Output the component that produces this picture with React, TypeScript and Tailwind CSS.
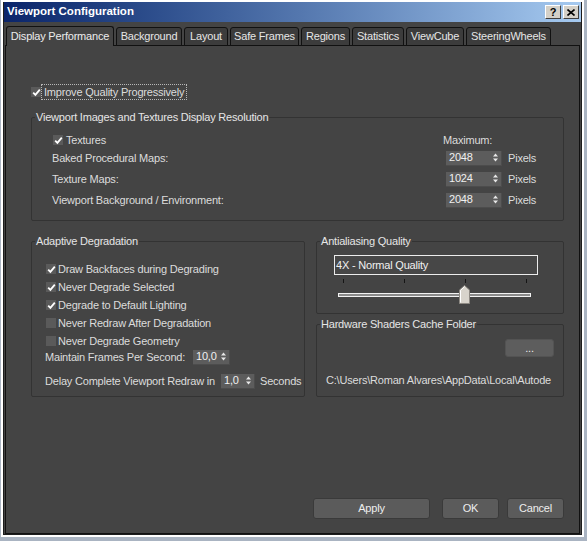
import React from "react";

function Check({ checked }: { checked?: boolean }) {
  return (
    <span className="w-[10px] h-[10px] bg-[#5a5a5a] flex items-center justify-center shrink-0">
      {checked && (
        <svg width="9" height="9" viewBox="0 0 9 9">
          <path d="M1.2 4.6 L3.4 6.9 L7.8 1.6" stroke="#ffffff" strokeWidth="1.8" fill="none" />
        </svg>
      )}
    </span>
  );
}

function Spin({ value, className }: { value: string; className: string }) {
  return (
    <div
      className={`${className} h-[15px] bg-[#5c5c5c] border-b border-r border-[#4c4c4c] flex items-center pl-[3px] pr-[3px] text-[#f0f0f0] shrink-0`}
    >
      <span className="flex-1">{value}</span>
      <svg width="5" height="9" viewBox="0 0 5 9">
        <path d="M0 3.5 L2.5 0.5 L5 3.5 Z" fill="#e8e8e8" />
        <path d="M0 5.5 L2.5 8.5 L5 5.5 Z" fill="#e8e8e8" />
      </svg>
    </div>
  );
}

function Group({ title, className, children }: { title: string; className: string; children?: React.ReactNode }) {
  return (
    <div className={`relative border border-[#333333] rounded-[2px] ${className}`}>
      <span className="absolute -top-[7px] left-[3px] px-[1px] bg-[#444444] leading-[13px] text-[#e6e6e6] whitespace-nowrap">
        {title}
      </span>
      {children}
    </div>
  );
}

const tabs: [string, string][] = [
  ["Display Performance", "w-[108px]"],
  ["Background", "w-[66px]"],
  ["Layout", "w-[44px]"],
  ["Safe Frames", "w-[69px]"],
  ["Regions", "w-[49px]"],
  ["Statistics", "w-[52px]"],
  ["ViewCube", "w-[58px]"],
  ["SteeringWheels", "w-[85px]"],
];

export default function App() {
  return (
    <div className="w-[587px] h-[541px] bg-[#aab4c2] overflow-hidden font-['Liberation_Sans',Arial,sans-serif] text-[11px] tracking-[-0.2px] text-[#dcdcdc]">
      <div className="ml-[1px] w-[583px] h-[537px] bg-white px-[2px] pt-[2px] pb-[2px] flex flex-col">
        <div className="flex-1 flex flex-col bg-[#444444] border-l border-r border-b border-[#1c1c1c]">
          {/* title bar */}
          <div className="h-[20px] flex items-center pl-[3px] pr-[2px] bg-linear-to-r from-[#0a246a] to-[#a6caf0] shrink-0">
            <span className="text-white font-bold text-[11.5px] tracking-[0px]">Viewport Configuration</span>
            <div className="ml-auto flex gap-[2px]">
              <div className="w-[16px] h-[14px] bg-[#d4d0c8] border border-t-white border-l-white border-r-[#404040] border-b-[#404040] flex items-center justify-center text-black font-bold text-[11px] leading-none">
                ?
              </div>
              <div className="w-[16px] h-[14px] bg-[#d4d0c8] border border-t-white border-l-white border-r-[#404040] border-b-[#404040] flex items-center justify-center">
                <svg width="8" height="7" viewBox="0 0 8 7">
                  <path d="M0.5 0.5 L7.5 6.5 M7.5 0.5 L0.5 6.5" stroke="#000" strokeWidth="1.6" />
                </svg>
              </div>
            </div>
          </div>

          {/* tabs */}
          <div className="flex items-end gap-[2px] mt-[4px] ml-[2px] h-[20px] -mb-px relative z-10">
            {tabs.map(([t, w], i) => (
              <div
                key={t}
                className={
                  i === 0
                    ? `${w} h-[20px] border border-b-0 border-[#111111] rounded-t-[3px] bg-[#444444] flex items-center justify-center text-[#ececec]`
                    : `${w} h-[19px] border border-[#111111] rounded-t-[3px] bg-[#3c3c3c] flex items-center justify-center text-[#e6e6e6]`
                }
              >
                {t}
              </div>
            ))}
          </div>

          {/* panel */}
          <div className="flex-1 mx-px border border-[#111111] bg-[#444444] flex flex-col pl-[25px] pr-[15px] pt-[38px] pb-[14px]">
            <div className="flex items-center h-[16px]">
              <Check checked />
              <span className="border border-dotted border-[#b8b8b8] h-[16px] px-[2px] flex items-center">
                Improve Quality Progressively
              </span>
            </div>

            <Group title="Viewport Images and Textures Display Resolution" className="mt-[17px] h-[104px] shrink-0">
              <div className="flex flex-col pt-[15px] pl-[21px]">
                <div className="flex items-center h-[14px]">
                  <div className="flex-1 flex items-center">
                    <Check checked />
                    <span className="ml-[3px]">Textures</span>
                  </div>
                  <div className="w-[117px]">
                    <span className="-ml-[3px]">Maximum:</span>
                  </div>
                </div>
                {[
                  ["Baked Procedural Maps:", "2048", "mt-[3px]"],
                  ["Texture Maps:", "1024", "mt-[5px]"],
                  ["Viewport Background / Environment:", "2048", "mt-[5px]"],
                ].map(([label, val, mt]) => (
                  <div key={label} className={`flex items-center h-[16px] ${mt}`}>
                    <div className="flex-1 -ml-[1px]">{label}</div>
                    <div className="w-[117px] flex items-center">
                      <Spin value={val} className="w-[56px]" />
                      <span className="ml-[6px]">Pixels</span>
                    </div>
                  </div>
                ))}
              </div>
            </Group>

            <div className="flex gap-[11px] mt-[20px]">
              <Group title="Adaptive Degradation" className="w-[274px] h-[156px] shrink-0">
                <div className="flex flex-col pt-[18px] pl-[14px]">
                  {[
                    ["Draw Backfaces during Degrading", true],
                    ["Never Degrade Selected", true],
                    ["Degrade to Default Lighting", true],
                    ["Never Redraw After Degradation", false],
                    ["Never Degrade Geometry", false],
                  ].map(([label, c]) => (
                    <div key={label as string} className="flex items-center h-[18px]">
                      <Check checked={c as boolean} />
                      <span className="ml-[2px]">{label as string}</span>
                    </div>
                  ))}
                  <div className="flex items-center h-[16px] -mt-[1px] -ml-[1px]">
                    <span className="w-[148px]">Maintain Frames Per Second:</span>
                    <Spin value="10,0" className="w-[37px]" />
                  </div>
                  <div className="flex items-center h-[16px] mt-[8px] -ml-[1px]">
                    <span className="w-[176px]">Delay Complete Viewport Redraw in</span>
                    <Spin value="1,0" className="w-[34px]" />
                    <span className="ml-[5px]">Seconds</span>
                  </div>
                </div>
              </Group>

              <div className="flex-1 flex flex-col gap-[10px]">
                <Group title="Antialiasing Quality" className="h-[73px] shrink-0">
                  <div className="pt-[13px] pl-[17px]">
                    <div className="w-[204px] h-[20px] border border-[#ececec] bg-[#474747] flex items-center pl-px text-[#f0f0f0]">
                      4X - Normal Quality
                    </div>
                    <div className="relative w-[204px] h-[32px]">
                      <div className="absolute top-[4px] left-[9px] w-px h-[4px] bg-[#151515]" />
                      <div className="absolute top-[4px] left-[70px] w-px h-[4px] bg-[#151515]" />
                      <div className="absolute top-[4px] left-[131px] w-px h-[4px] bg-[#151515]" />
                      <div className="absolute top-[4px] left-[192px] w-px h-[4px] bg-[#151515]" />
                      <div className="absolute top-[18px] left-[4px] w-[193px] h-[4px] border border-[#f2f2f2] bg-[#8a8a8a]" />
                      <svg className="absolute top-[10px] left-[125px]" width="11" height="19" viewBox="0 0 11 19">
                        <path d="M0.5 5 L5.5 0.5 L10.5 5 V18.5 H0.5 Z" fill="#d8d4cc" stroke="#8e8a84" />
                        <path d="M1.5 5.3 L5.5 1.7 M1.5 5.3 V17.5" stroke="#ffffff" strokeWidth="1" fill="none" />
                      </svg>
                    </div>
                  </div>
                </Group>
                <Group title="Hardware Shaders Cache Folder" className="h-[73px] shrink-0">
                  <div className="pt-[14px] flex flex-col">
                    <div className="flex justify-end pr-[9px]">
                      <div className="w-[49px] h-[18px] bg-[#5d5d5d] border border-[#535353] rounded-[3px] flex items-end justify-center pb-[2px] text-[#eeeeee] leading-none">
                        ...
                      </div>
                    </div>
                    <div className="mt-[16px] ml-[9px] h-[14px] leading-[14px] whitespace-nowrap">
                      C:\Users\Roman Alvares\AppData\Local\Autode
                    </div>
                  </div>
                </Group>
              </div>
            </div>

            <div className="mt-auto flex justify-end">
              <div className="w-[117px] h-[21px] bg-[#5b5b5b] border border-[#3a3a3a] rounded-[3px] flex items-center justify-center text-[#eeeeee]">
                Apply
              </div>
              <div className="ml-[12px] w-[57px] h-[21px] bg-[#5b5b5b] border border-[#3a3a3a] rounded-[3px] flex items-center justify-center text-[#eeeeee]">
                OK
              </div>
              <div className="ml-[8px] w-[57px] h-[21px] bg-[#5b5b5b] border border-[#3a3a3a] rounded-[3px] flex items-center justify-center text-[#eeeeee]">
                Cancel
              </div>
            </div>
          </div>
        </div>
      </div>
    </div>
  );
}
